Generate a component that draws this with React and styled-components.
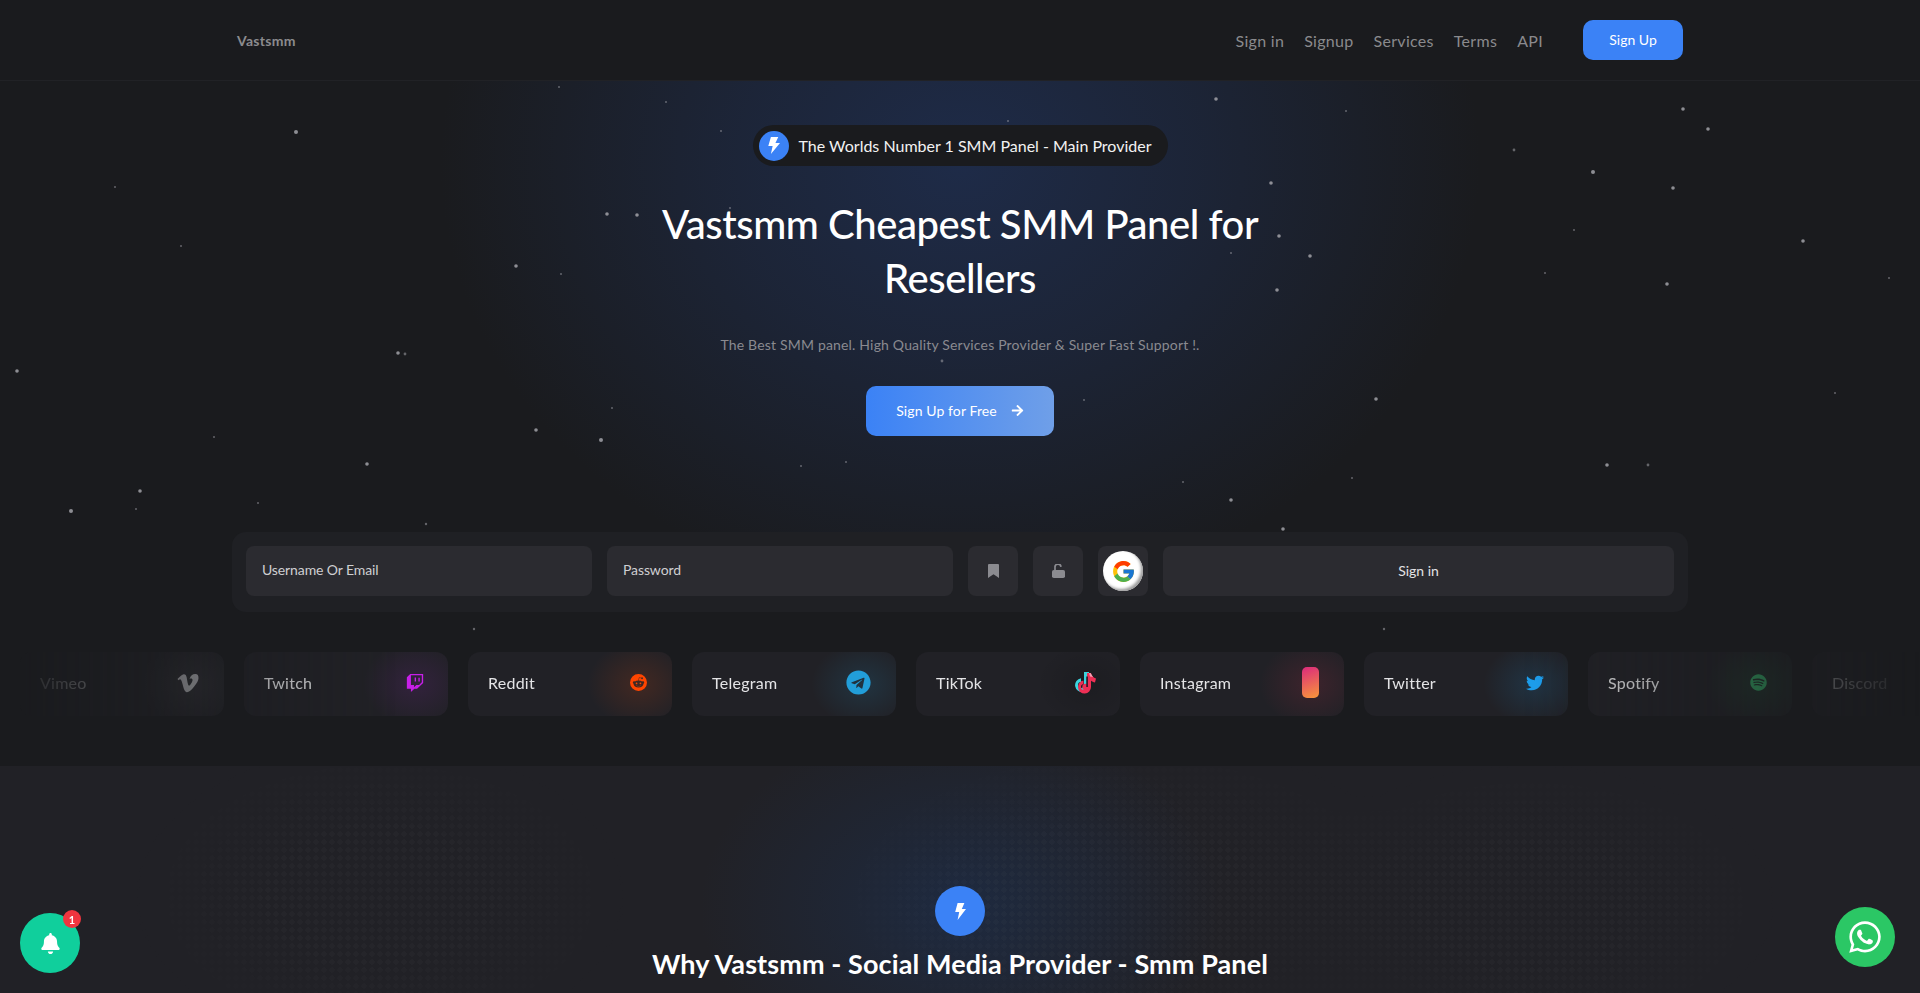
import React from 'react';
import styled, { createGlobalStyle } from 'styled-components';
import { FaArrowRight, FaBell, FaDiscord, FaSpotify, FaTelegram, FaTwitch, FaTwitter, FaVimeoV, FaWhatsapp } from 'react-icons/fa';
import { FcGoogle } from 'react-icons/fc';
import { BsReddit } from 'react-icons/bs';

const FONT = `Lato, "Noto Sans", sans-serif`;

const stars = [
  [296, 132, 2], [115, 187, 1], [181, 246, 1], [559, 87, 1], [666, 102, 1], [721, 131, 1], [607, 214, 1.8],
  [637, 215, 1.8], [730, 208, 1], [516, 266, 1.8], [561, 274, 1], [1216, 99, 1.8], [1346, 111, 1], [1008, 121, 1],
  [1271, 183, 1.8], [1279, 236, 1.8], [1310, 256, 1.8], [1231, 253, 1], [1277, 290, 1.8], [1683, 109, 1.8],
  [1708, 129, 1.8], [1514, 150, 1.4], [1593, 172, 2], [1673, 188, 1.8], [1803, 241, 1.8], [1574, 230, 1],
  [1545, 273, 1], [1667, 284, 1.8], [1889, 278, 1], [17, 371, 1.8], [398, 353, 1.8], [405, 354, 1.4], [942, 361, 1.4],
  [1376, 399, 1.8], [1084, 400, 1], [1835, 393, 1], [612, 408, 1], [536, 430, 1.8], [601, 440, 2], [214, 437, 1],
  [801, 466, 1], [846, 462, 1], [367, 464, 1.8], [1352, 478, 1], [1607, 465, 1.8], [1648, 465, 1.4], [1183, 482, 1],
  [140, 491, 1.8], [71, 511, 2], [136, 509, 1], [258, 503, 1], [1231, 500, 1.8], [426, 524, 1.2], [1283, 529, 1.8],
  [474, 629, 1.2], [1384, 629, 1.2],
];

const navLinks = ['Sign in', 'Signup', 'Services', 'Terms', 'API'];

const BoltIcon = ({ width }) => (
  <svg width={width} height="17" viewBox="0 0 12 18" preserveAspectRatio="none" fill="currentColor">
    <path d="M3.6 0H10.4L7.8 6.4H12L3.6 18L5.2 9.4H1.2Z" />
  </svg>
);

const BookmarkIcon = () => (
  <svg width="11" height="14" viewBox="0 0 11 14" fill="currentColor">
    <path d="M1 0H10A1 1 0 0 1 11 1V14L5.5 10.2L0 14V1A1 1 0 0 1 1 0Z" />
  </svg>
);

const OpenLockIcon = () => (
  <svg width="13" height="14" viewBox="0 0 13 14" fill="currentColor">
    <rect x="0" y="6" width="13" height="8" rx="1.8" />
    <path d="M3 7V3.6A3 3 0 0 1 9 2.8" fill="none" stroke="currentColor" strokeWidth="1.7" />
  </svg>
);

const TikTokIcon = () => (
  <svg width="22" height="23" viewBox="0 0 22 23">
    <path d="M9 1H14V13A7 7 0 1 1 6 7.2V11A3 3 0 1 0 9 14Z" fill="#3cd4de" />
    <path d="M12 2H16C16.5 5 18.500 6.500 21 7.500L20 11.500C18.500 11.200 17 10.500 16 9.800V16A6.500 6.500 0 1 1 8.500 9.600V13A3 3 0 1 0 12 16Z" fill="#ee2f55" />
    <circle cx="10.500" cy="16" r="3.200" fill="#ee2f55" />
    <path d="M11.200 5.500H13V16H11.200Z" fill="#3a1c2c" />
    <path d="M14 2H15.500L18 6L15 5.500Z" fill="#f6a0b2" />
  </svg>
);

const platforms = [
  { name: 'Vimeo', color: '#c4c4c8', glow: '120,120,125', shift: 3, icon: <FaVimeoV size={24} /> },
  { name: 'Twitch', color: '#c71fe8', glow: '150,40,190', shift: 0, icon: <FaTwitch size={18} /> },
  { name: 'Reddit', color: '#ff4500', glow: '255,80,10', shift: 1, icon: <BsReddit size={17} /> },
  { name: 'Telegram', color: '#229ed9', glow: '34,158,217', shift: 5, icon: <FaTelegram size={25} /> },
  { name: 'TikTok', color: '#ee2f55', glow: '0,0,0', shift: 1, icon: <TikTokIcon /> },
  { name: 'Instagram', color: '#e1306c', glow: '225,48,80', shift: 1, icon: <InstaMark /> },
  { name: 'Twitter', color: '#1da1f2', glow: '29,161,242', shift: 0, icon: <FaTwitter size={18} /> },
  { name: 'Spotify', color: '#38c873', glow: '29,185,84', shift: 1, icon: <FaSpotify size={17} /> },
  { name: 'Discord', color: '#5865f2', glow: '88,101,242', shift: 0, icon: <FaDiscord size={20} /> },
];

function InstaMark() {
  return <InstaPill />;
}

const App = () => {
  return (
    <Page>
      <GlobalStyle />
      <NavBar>
        <NavInner>
          <Logo>Vastsmm</Logo>
          <NavLinks>
            {navLinks.map((link) => (
              <NavLink key={link}>{link}</NavLink>
            ))}
            <NavButton>Sign Up</NavButton>
          </NavLinks>
        </NavInner>
      </NavBar>

      <Hero>
        <Stars width="1920" height="766" viewBox="0 0 1920 766">
          {stars.map(([x, y, r]) => (
            <circle key={`${x}-${y}`} cx={x} cy={y} r={r} fill="#a2a2a8" opacity={r > 1.5 ? 0.85 : 0.55} />
          ))}
        </Stars>
        <Pill>
          <PillIcon>
            <BoltIcon width={13} />
          </PillIcon>
          The Worlds Number 1 SMM Panel - Main Provider
        </Pill>
        <Title>Vastsmm Cheapest SMM Panel for Resellers</Title>
        <Subtitle>The Best SMM panel. High Quality Services Provider &amp; Super Fast Support !.</Subtitle>
        <CtaButton>
          Sign Up for Free
          <FaArrowRight size={13} />
        </CtaButton>

        <LoginBar>
          <Field>Username Or Email</Field>
          <Field>Password</Field>
          <IconTile>
            <BookmarkIcon />
          </IconTile>
          <IconTile>
            <OpenLockIcon />
          </IconTile>
          <IconTile>
            <GoogleDisc>
              <FcGoogle size={25} />
            </GoogleDisc>
          </IconTile>
          <SubmitButton>Sign in</SubmitButton>
        </LoginBar>

        <Marquee>
          {platforms.map((p) => (
            <PlatformCard key={p.name} $glow={p.glow}>
              {p.name}
              <PlatformIcon $color={p.color} $shift={p.shift}>
                {p.icon}
              </PlatformIcon>
            </PlatformCard>
          ))}
        </Marquee>
      </Hero>

      <WhySection>
        <WhyIcon>
          <BoltIcon width={12} />
        </WhyIcon>
        <WhyTitle>Why Vastsmm - Social Media Provider - Smm Panel</WhyTitle>
      </WhySection>

      <BellButton>
        <FaBell size={21} />
        <BellBadge>1</BellBadge>
      </BellButton>
      <WhatsappButton>
        <FaWhatsapp size={36} />
      </WhatsappButton>
    </Page>
  );
};

const GlobalStyle = createGlobalStyle`
  html, body {
    margin: 0;
    padding: 0;
    background: #1a1b1e;
    font-family: ${FONT};
    overflow: hidden;
  }
  * {
    box-sizing: border-box;
  }
`;

const Page = styled.div`
  height: 993px;
  overflow: hidden;
  color: #fff;
`;

const NavBar = styled.header`
  height: 81px;
  background: #1a1b1e;
  border-bottom: 1px solid #212226;
`;

const NavInner = styled.div`
  width: 1446px;
  height: 80px;
  margin: 0 auto;
  display: flex;
  align-items: center;
  justify-content: space-between;
`;

const Logo = styled.div`
  font-size: 14px;
  font-weight: 700;
  letter-spacing: 0.3px;
  color: #8b8b8e;
`;

const NavLinks = styled.nav`
  display: flex;
  align-items: center;
  gap: 20px;
`;

const NavLink = styled.a`
  font-size: 16px;
  letter-spacing: 0.3px;
  color: #8a8a8d;
`;

const NavButton = styled.button`
  width: 100px;
  height: 40px;
  margin-left: 20px;
  padding-bottom: 2px;
  border: 0;
  border-radius: 10px;
  background: #3b82f6;
  color: #fff;
  font-family: ${FONT};
  font-size: 14px;
`;

const Hero = styled.section`
  position: relative;
  height: 685px;
  padding-top: 44px;
  display: flex;
  flex-direction: column;
  align-items: center;
  background:
    radial-gradient(ellipse 520px 440px at 50% 12%, #1e2b48 0%, rgba(30, 43, 72, 0.6) 45%, rgba(26, 27, 30, 0) 100%),
    #1a1b1e;
`;

const Stars = styled.svg`
  position: absolute;
  left: 0;
  top: -81px;
  pointer-events: none;
`;

const Pill = styled.div`
  position: relative;
  height: 41px;
  width: 415px;
  padding-left: 6px;
  display: flex;
  align-items: center;
  gap: 10px;
  border-radius: 21px;
  background: #1a1b1e;
  font-size: 16px;
  color: #f2f2f2;
`;

const PillIcon = styled.span`
  width: 30px;
  height: 30px;
  border-radius: 50%;
  background: #3b82f6;
  display: flex;
  align-items: center;
  justify-content: center;
  color: #fff;
`;

const Title = styled.h1`
  position: relative;
  width: 660px;
  margin: 31px 0 0;
  font-size: 40px;
  line-height: 54px;
  font-weight: 500;
  letter-spacing: -0.45px;
  text-align: center;
  color: #fff;
`;

const Subtitle = styled.p`
  position: relative;
  margin: 30px 0 0;
  font-size: 14px;
  line-height: 20px;
  letter-spacing: 0.18px;
  color: #8a8a90;
`;

const CtaButton = styled.button`
  position: relative;
  width: 188px;
  height: 50px;
  margin-top: 31px;
  padding-bottom: 2px;
  border: 0;
  border-radius: 10px;
  display: flex;
  align-items: center;
  justify-content: center;
  gap: 14px;
  background: linear-gradient(90deg, #3b82f6, #6f9fe8);
  color: #fff;
  font-family: ${FONT};
  font-size: 14px;
  letter-spacing: 0.1px;
`;

const LoginBar = styled.div`
  position: relative;
  width: 1456px;
  height: 80px;
  margin-top: 96px;
  padding: 14px;
  display: flex;
  gap: 15px;
  border-radius: 14px;
  background: #1f2024;
`;

const Field = styled.div`
  width: 346px;
  height: 50px;
  padding: 0 0 3px 16px;
  display: flex;
  align-items: center;
  border-radius: 8px;
  background: #2b2b30;
  font-size: 14px;
  letter-spacing: -0.1px;
  color: #cfcfd2;
`;

const IconTile = styled.div`
  width: 50px;
  height: 50px;
  flex: none;
  display: flex;
  align-items: center;
  justify-content: center;
  border-radius: 8px;
  background: #2b2b30;
  color: #8b8b90;
`;

const GoogleDisc = styled.span`
  width: 40px;
  height: 40px;
  display: flex;
  align-items: center;
  justify-content: center;
  border-radius: 50%;
  background: #fff;
  box-shadow: inset -2px -2px 3px #9a9a9a;
`;

const SubmitButton = styled.button`
  flex: 1;
  height: 50px;
  padding-bottom: 3px;
  border: 0;
  border-radius: 8px;
  background: #2b2b30;
  color: #e2e2e4;
  font-family: ${FONT};
  font-size: 14px;
`;

const Marquee = styled.div`
  width: 100%;
  margin-top: 40px;
  padding-left: 20px;
  display: flex;
  gap: 20px;
  overflow: hidden;
  mask-image: linear-gradient(90deg, transparent 0, #000 400px, #000 1520px, transparent 100%);
`;

const PlatformCard = styled.div`
  width: 204px;
  height: 64px;
  flex: none;
  padding: 0 20px 3px;
  display: flex;
  align-items: center;
  justify-content: space-between;
  border-radius: 12px;
  background:
    radial-gradient(ellipse 52px 42px at 84% 50%, rgba(${(p) => p.$glow}, 0.15), rgba(${(p) => p.$glow}, 0) 100%),
    #212126;
  font-size: 16px;
  letter-spacing: 0.25px;
  color: #e4e4e6;
`;

const PlatformIcon = styled.span`
  width: 26px;
  margin-right: ${(p) => p.$shift}px;
  display: flex;
  align-items: center;
  justify-content: center;
  color: ${(p) => p.$color};
`;

const InstaPill = styled.span`
  display: block;
  width: 17px;
  height: 31px;
  border-radius: 5px;
  background: linear-gradient(160deg, #dc2a7c, #f8973a);
`;

const WhySection = styled.section`
  position: relative;
  height: 227px;
  padding-top: 120px;
  display: flex;
  flex-direction: column;
  align-items: center;
  background:
    radial-gradient(ellipse 260px 190px at 50% 62%, #1e2a40 0%, rgba(33, 33, 38, 0) 100%),
    #212126;
  &::before {
    content: '';
    position: absolute;
    inset: 0;
    background-image: radial-gradient(circle, rgba(255, 255, 255, 0.02) 2.5px, transparent 3px);
    background-size: 8px 8px;
    mask-image:
      radial-gradient(ellipse 260px 160px at 380px 130px, #000 40%, transparent 100%),
      radial-gradient(ellipse 320px 170px at 1120px 130px, #000 40%, transparent 100%),
      radial-gradient(ellipse 260px 150px at 1530px 140px, #000 40%, transparent 100%);
  }
`;

const WhyIcon = styled.div`
  position: relative;
  width: 50px;
  height: 50px;
  border-radius: 50%;
  display: flex;
  align-items: center;
  justify-content: center;
  background: #3b82f6;
  color: #fff;
`;

const WhyTitle = styled.h2`
  position: relative;
  margin: 13px 0 0;
  font-size: 27px;
  line-height: 30px;
  font-weight: 700;
  letter-spacing: 0.1px;
  color: #fff;
`;

const BellButton = styled.div`
  position: fixed;
  left: 20px;
  top: 913px;
  width: 60px;
  height: 60px;
  display: flex;
  align-items: center;
  justify-content: center;
  border-radius: 50%;
  background: #10cf9c;
  color: #fff;
`;

const BellBadge = styled.span`
  position: absolute;
  top: -3px;
  right: -1px;
  width: 18px;
  height: 18px;
  display: flex;
  align-items: center;
  justify-content: center;
  border-radius: 50%;
  background: #f0353f;
  font-size: 11px;
  font-weight: 700;
`;

const WhatsappButton = styled.div`
  position: fixed;
  left: 1835px;
  top: 907px;
  width: 60px;
  height: 60px;
  display: flex;
  align-items: center;
  justify-content: center;
  border-radius: 50%;
  background: #2bc765;
  color: #fff;
`;

export default App;
